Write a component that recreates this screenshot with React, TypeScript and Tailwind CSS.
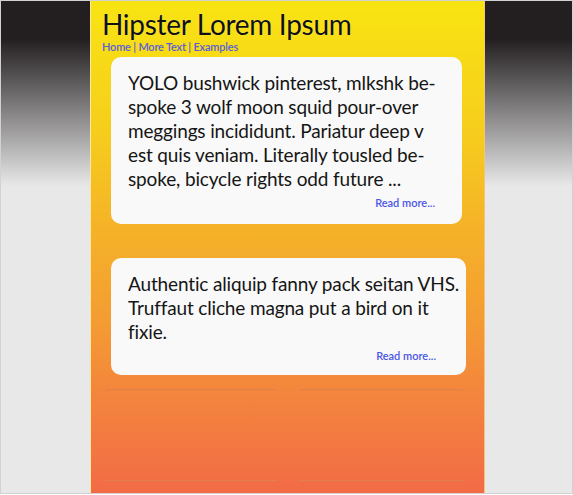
import React from "react";

const font = { fontFamily: "Lato, 'Open Sans', 'Noto Sans', sans-serif" };

function Card({ lines, className }: { lines: string[]; className?: string }) {
  return (
    <div className={"rounded-[10px] bg-[#f9f9f9] pl-[17px] pr-[27px] " + (className ?? "")}>
      <p className="text-[19px] leading-[24px] text-[#151515] tracking-[-0.15px] whitespace-nowrap">
        {lines.map((l, i) => (
          <span key={i} className="block">
            {l}
          </span>
        ))}
      </p>
      <div className="mt-[5px] text-right text-[11px] leading-[14px] font-semibold text-[#4b55e6]">
        Read more...
      </div>
    </div>
  );
}

export default function App() {
  return (
    <div
      style={font}
      className="w-[573px] h-[494px] border border-[#d2d2d2] overflow-hidden bg-[linear-gradient(to_bottom,#231f20_0px,#231f20_38px,#e8e8e8_185px,#e8e8e8_100%)]"
    >
      <div className="flex h-full pl-[89px]">
        <div className="w-[395px] h-full border-l border-r border-l-[#fbe9a0] border-r-[#f7c27a] bg-[linear-gradient(to_bottom,#f8e412_0%,#f6cf1c_25%,#f5b427_45%,#f49c33_65%,#f3853d_80%,#f26b46_100%)]">
          <div className="pl-[11px] pt-[7px]">
            <h1 className="text-[28px] leading-[32px] tracking-[-0.3px] text-[#111] whitespace-nowrap [text-shadow:0_0_1px_#fff28a]">
              Hipster Lorem Ipsum
            </h1>
            <nav className="mt-[1px] text-[11px] leading-[12px] font-semibold tracking-[-0.2px] text-[#5a5fd8] whitespace-nowrap">
              Home | More Text | Examples
            </nav>
          </div>
          <div className="pl-[20px] pr-[20px] mt-[4px]">
            <Card
              className="pt-[14px] pb-[14px] mr-[2px]"
              lines={[
                "YOLO bushwick pinterest, mlkshk be-",
                "spoke 3 wolf moon squid pour-over",
                "meggings incididunt. Pariatur deep v",
                "est quis veniam. Literally tousled be-",
                "spoke, bicycle rights odd future ...",
              ]}
            />
            <Card
              className="mt-[34px] pt-[14px] pb-[12px] -mr-[2px] pr-[30px]"
              lines={[
                "Authentic aliquip fanny pack seitan VHS.",
                "Truffaut cliche magna put a bird on it",
                "fixie.",
              ]}
            />
          </div>
          <div className="grid grid-cols-2 gap-[22px] px-[15px] mt-[14px]">
            <div className="border-t border-[#e0804a] h-[92px] border-b" />
            <div className="border-t border-[#e0804a] h-[92px] border-b mr-[6px]" />
          </div>
        </div>
      </div>
    </div>
  );
}
